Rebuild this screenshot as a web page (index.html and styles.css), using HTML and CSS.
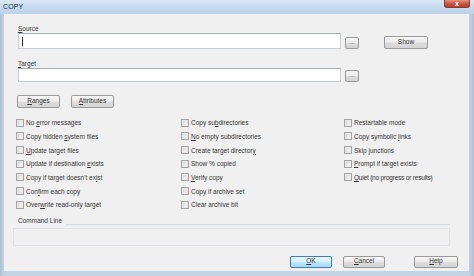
FILE: index.html
```html
<!DOCTYPE html>
<html>
<head>
<meta charset="utf-8">
<link rel="stylesheet" href="styles.css">
</head>
<body>
<div class="window">
  <div class="titlebar">
    <span class="title">COPY</span>
    <span class="close">x</span>
  </div>
  <div class="content">
    <div class="label lbl-source"><u>S</u>ource</div>
    <div class="path-row">
      <div class="input input-source"><span class="caret"></span></div>
      <div class="btn btn-dots">...</div>
      <div class="btn btn-show">Show</div>
    </div>
    <div class="label lbl-target"><u>T</u>arget</div>
    <div class="path-row">
      <div class="input input-target"></div>
      <div class="btn btn-dots">...</div>
    </div>
    <div class="tab-row">
      <div class="btn btn-tab"><span><u>R</u>anges</span></div>
      <div class="btn btn-tab"><span><u>A</u>ttributes</span></div>
    </div>
    <div class="options">
      <div class="opt"><span class="cb"></span><span>No <u>e</u>rror messages</span></div>
      <div class="opt"><span class="cb"></span><span>Copy su<u>b</u>directories</span></div>
      <div class="opt"><span class="cb"></span><span>Restartable mode</span></div>

      <div class="opt"><span class="cb"></span><span>Copy hidden <u>s</u>ystem files</span></div>
      <div class="opt"><span class="cb"></span><span><u>N</u>o empty subdirectories</span></div>
      <div class="opt"><span class="cb"></span><span>Copy symbolic <u>l</u>inks</span></div>

      <div class="opt"><span class="cb"></span><span><u>U</u>pdate target files</span></div>
      <div class="opt"><span class="cb"></span><span>Create target director<u>y</u></span></div>
      <div class="opt"><span class="cb"></span><span>Skip <u>j</u>unctions</span></div>

      <div class="opt"><span class="cb"></span><span>Update if destination <u>e</u>xists</span></div>
      <div class="opt"><span class="cb"></span><span>Show % copied</span></div>
      <div class="opt"><span class="cb"></span><span><u>P</u>rompt if target exists</span></div>

      <div class="opt"><span class="cb"></span><span>Copy if target doesn't ex<u>i</u>st</span></div>
      <div class="opt"><span class="cb"></span><span><u>V</u>erify copy</span></div>
      <div class="opt"><span class="cb"></span><span class="narrow"><u>Q</u>uiet (no progress or results)</span></div>

      <div class="opt"><span class="cb"></span><span>Con<u>f</u>irm each copy</span></div>
      <div class="opt"><span class="cb"></span><span>Copy if archive set</span></div>
      <div class="opt"></div>

      <div class="opt"><span class="cb"></span><span>Over<u>w</u>rite read-only target</span></div>
      <div class="opt"><span class="cb"></span><span>Clear archive bit</span></div>
      <div class="opt"></div>
    </div>
    <div class="cmd-head">
      <span class="label">Command Line</span>
      <span class="cmd-rule"></span>
    </div>
    <div class="cmd-box"></div>
    <div class="footer">
      <div class="btn btn-foot btn-default"><span><u>O</u>K</span></div>
      <div class="btn btn-foot"><span><u>C</u>ancel</span></div>
      <div class="btn btn-foot btn-help"><span><u>H</u>elp</span></div>
    </div>
  </div>
</div>
</body>
</html>
```
FILE: styles.css
```css
* { box-sizing: border-box; }
html, body { margin: 0; padding: 0; }
body {
  width: 474px;
  height: 276px;
  overflow: hidden;
  font-family: "Liberation Sans", "DejaVu Sans", sans-serif;
  font-size: 6.5px;
  color: #333;
  background: #b4c5d8;
}
u { text-decoration: underline; text-underline-offset: 1px; }

.window {
  width: 474px;
  height: 276px;
  display: flex;
  flex-direction: column;
  padding: 0 5px 5px 4px;
  background: linear-gradient(90deg, #aebfd2 0, #c2d3e6 4px, #c2d3e6 calc(100% - 5px), #aebfd2 100%);
}

.titlebar {
  height: 14px;
  margin: 0 -5px 0 -4px;
  padding-left: 3px;
  display: flex;
  align-items: flex-start;
  justify-content: space-between;
  background: linear-gradient(180deg, #dbe8f6 0, #c6daef 50%, #bcd2ea 100%);
}
.title {
  font-size: 7px;
  line-height: 14px;
  color: #1c2a3a;
  letter-spacing: 0.1px;
}
.close {
  width: 26px;
  height: 8px;
  margin-right: 4px;
  border: 1px solid #8a3a32;
  border-top: none;
  border-radius: 0 0 3px 3px;
  background: linear-gradient(180deg, #e2927e 0, #c9553e 55%, #b8402b 100%);
  color: #fff;
  font-size: 7px;
  font-weight: bold;
  line-height: 7px;
  text-align: center;
}

.content {
  flex: 1;
  background: #f0f0f0;
  padding: 11px 0 0 14px;
  display: flex;
  flex-direction: column;
}

.label { line-height: 8px; }
.lbl-target { margin-top: 11px; }

.path-row {
  display: flex;
  align-items: flex-end;
}
.input {
  width: 323px;
  background: #fff;
  border: 1px solid #c9ced6;
  border-top-color: #a9aeb6;
}
.input-source { height: 16px; display: flex; align-items: center; padding-left: 3px; }
.input-target { height: 14px; }
.caret { width: 1px; height: 9px; background: #333; }

.btn {
  display: flex;
  align-items: center;
  justify-content: center;
  border: 1px solid #9a9a9a;
  border-radius: 2px;
  background: linear-gradient(180deg, #f6f6f6 0, #ececec 45%, #dcdcdc 55%, #d4d4d4 100%);
  line-height: 1;
}
.btn-dots {
  width: 14px;
  height: 12px;
  margin-left: 4px;
  font-size: 6px;
  padding-bottom: 2px;
}
.btn-show {
  width: 44px;
  height: 13px;
  margin-left: 25px;
}

.tab-row {
  display: flex;
  gap: 11px;
  margin-top: 13px;
  margin-left: -1px;
}
.btn-tab { width: 43px; height: 13px; }

.options {
  display: grid;
  grid-template-columns: 165px 163px 1fr;
  grid-auto-rows: 13.67px;
  margin-top: 8px;
  margin-left: -2px;
}
.opt {
  display: flex;
  align-items: center;
  white-space: nowrap;
}
.narrow { letter-spacing: -0.2px; }
.cb {
  width: 8px;
  height: 8px;
  margin-right: 2px;
  border: 1px solid #a3a3a3;
  background: linear-gradient(135deg, #d6d6d6 0, #ececec 60%, #f6f6f6 100%);
  box-shadow: inset 0 0 0 1px #e8e8e8;
  flex: none;
}

.cmd-head {
  display: flex;
  align-items: flex-end;
  margin-top: 5px;
  margin-right: 19px;
}
.cmd-head .label { padding-right: 3px; }
.cmd-rule {
  flex: 1;
  border-top: 1px solid #d8dde2;
}
.cmd-box {
  height: 18px;
  margin-top: 3px;
  margin-left: -5px;
  margin-right: 19px;
  border: 1px solid #dde1e5;
  background: #f0f0f0;
}

.footer {
  display: flex;
  margin-top: 10px;
  padding-left: 272px;
}
.btn-foot { width: 42px; height: 12px; margin-right: 11px; }
.btn-help { width: 44px; margin-left: 18px; }
.btn-default {
  border-color: #3c7fb1;
  background: linear-gradient(180deg, #eaf6fd 0, #d9f0fc 45%, #bee6fd 55%, #a7d9f5 100%);
}
```
